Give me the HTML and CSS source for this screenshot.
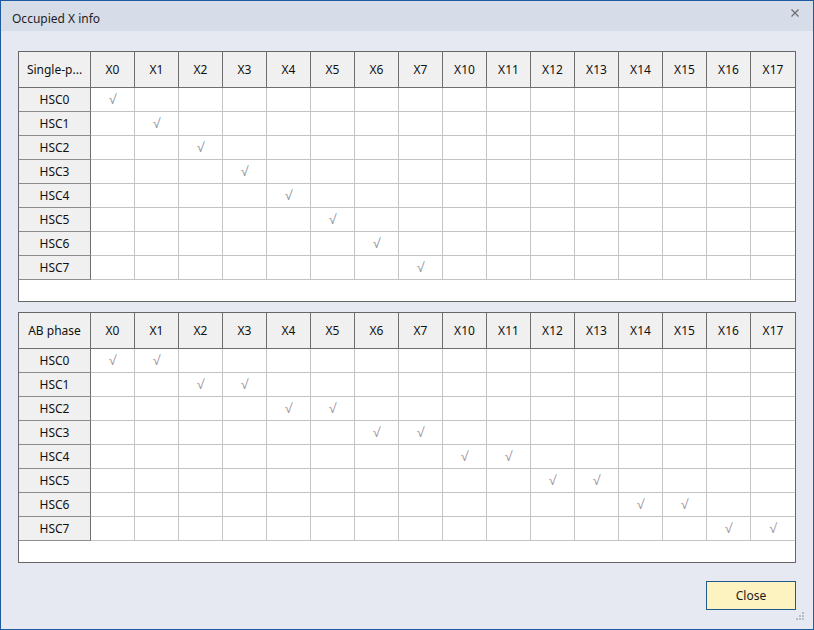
FILE: index.html
```html
<!DOCTYPE html>
<html>
<head>
<meta charset="utf-8">
<link rel="stylesheet" href="styles.css">
</head>
<body>
<div class="window">
  <div class="titlebar">
    <span class="title">Occupied X info</span>
    <svg class="close-x" width="8" height="8" viewBox="0 0 8 8"><path d="M0.5 0.5 L7.5 7.5 M7.5 0.5 L0.5 7.5" stroke="#6f6f6f" stroke-width="1.3" fill="none"/></svg>
  </div>
  <div class="content">
    <div class="gridbox">
      <div class="grid">
        <div class="hc rh">Single-p...</div><div class="hc">X0</div><div class="hc">X1</div><div class="hc">X2</div><div class="hc">X3</div><div class="hc">X4</div><div class="hc">X5</div><div class="hc">X6</div><div class="hc">X7</div><div class="hc">X10</div><div class="hc">X11</div><div class="hc">X12</div><div class="hc">X13</div><div class="hc">X14</div><div class="hc">X15</div><div class="hc">X16</div><div class="hc last">X17</div>
        <div class="rc">HSC0</div><div class="c">√</div><div class="c"></div><div class="c"></div><div class="c"></div><div class="c"></div><div class="c"></div><div class="c"></div><div class="c"></div><div class="c"></div><div class="c"></div><div class="c"></div><div class="c"></div><div class="c"></div><div class="c"></div><div class="c"></div><div class="c last"></div>
        <div class="rc">HSC1</div><div class="c"></div><div class="c">√</div><div class="c"></div><div class="c"></div><div class="c"></div><div class="c"></div><div class="c"></div><div class="c"></div><div class="c"></div><div class="c"></div><div class="c"></div><div class="c"></div><div class="c"></div><div class="c"></div><div class="c"></div><div class="c last"></div>
        <div class="rc">HSC2</div><div class="c"></div><div class="c"></div><div class="c">√</div><div class="c"></div><div class="c"></div><div class="c"></div><div class="c"></div><div class="c"></div><div class="c"></div><div class="c"></div><div class="c"></div><div class="c"></div><div class="c"></div><div class="c"></div><div class="c"></div><div class="c last"></div>
        <div class="rc">HSC3</div><div class="c"></div><div class="c"></div><div class="c"></div><div class="c">√</div><div class="c"></div><div class="c"></div><div class="c"></div><div class="c"></div><div class="c"></div><div class="c"></div><div class="c"></div><div class="c"></div><div class="c"></div><div class="c"></div><div class="c"></div><div class="c last"></div>
        <div class="rc">HSC4</div><div class="c"></div><div class="c"></div><div class="c"></div><div class="c"></div><div class="c">√</div><div class="c"></div><div class="c"></div><div class="c"></div><div class="c"></div><div class="c"></div><div class="c"></div><div class="c"></div><div class="c"></div><div class="c"></div><div class="c"></div><div class="c last"></div>
        <div class="rc">HSC5</div><div class="c"></div><div class="c"></div><div class="c"></div><div class="c"></div><div class="c"></div><div class="c">√</div><div class="c"></div><div class="c"></div><div class="c"></div><div class="c"></div><div class="c"></div><div class="c"></div><div class="c"></div><div class="c"></div><div class="c"></div><div class="c last"></div>
        <div class="rc">HSC6</div><div class="c"></div><div class="c"></div><div class="c"></div><div class="c"></div><div class="c"></div><div class="c"></div><div class="c">√</div><div class="c"></div><div class="c"></div><div class="c"></div><div class="c"></div><div class="c"></div><div class="c"></div><div class="c"></div><div class="c"></div><div class="c last"></div>
        <div class="rc">HSC7</div><div class="c"></div><div class="c"></div><div class="c"></div><div class="c"></div><div class="c"></div><div class="c"></div><div class="c"></div><div class="c">√</div><div class="c"></div><div class="c"></div><div class="c"></div><div class="c"></div><div class="c"></div><div class="c"></div><div class="c"></div><div class="c last"></div>
      </div>
    </div>
    <div class="gridbox">
      <div class="grid">
        <div class="hc rh">AB phase</div><div class="hc">X0</div><div class="hc">X1</div><div class="hc">X2</div><div class="hc">X3</div><div class="hc">X4</div><div class="hc">X5</div><div class="hc">X6</div><div class="hc">X7</div><div class="hc">X10</div><div class="hc">X11</div><div class="hc">X12</div><div class="hc">X13</div><div class="hc">X14</div><div class="hc">X15</div><div class="hc">X16</div><div class="hc last">X17</div>
        <div class="rc">HSC0</div><div class="c ab">√</div><div class="c ab">√</div><div class="c"></div><div class="c"></div><div class="c"></div><div class="c"></div><div class="c"></div><div class="c"></div><div class="c"></div><div class="c"></div><div class="c"></div><div class="c"></div><div class="c"></div><div class="c"></div><div class="c"></div><div class="c last"></div>
        <div class="rc">HSC1</div><div class="c"></div><div class="c"></div><div class="c ab">√</div><div class="c ab">√</div><div class="c"></div><div class="c"></div><div class="c"></div><div class="c"></div><div class="c"></div><div class="c"></div><div class="c"></div><div class="c"></div><div class="c"></div><div class="c"></div><div class="c"></div><div class="c last"></div>
        <div class="rc">HSC2</div><div class="c"></div><div class="c"></div><div class="c"></div><div class="c"></div><div class="c ab">√</div><div class="c ab">√</div><div class="c"></div><div class="c"></div><div class="c"></div><div class="c"></div><div class="c"></div><div class="c"></div><div class="c"></div><div class="c"></div><div class="c"></div><div class="c last"></div>
        <div class="rc">HSC3</div><div class="c"></div><div class="c"></div><div class="c"></div><div class="c"></div><div class="c"></div><div class="c"></div><div class="c ab">√</div><div class="c ab">√</div><div class="c"></div><div class="c"></div><div class="c"></div><div class="c"></div><div class="c"></div><div class="c"></div><div class="c"></div><div class="c last"></div>
        <div class="rc">HSC4</div><div class="c"></div><div class="c"></div><div class="c"></div><div class="c"></div><div class="c"></div><div class="c"></div><div class="c"></div><div class="c"></div><div class="c ab">√</div><div class="c ab">√</div><div class="c"></div><div class="c"></div><div class="c"></div><div class="c"></div><div class="c"></div><div class="c last"></div>
        <div class="rc">HSC5</div><div class="c"></div><div class="c"></div><div class="c"></div><div class="c"></div><div class="c"></div><div class="c"></div><div class="c"></div><div class="c"></div><div class="c"></div><div class="c"></div><div class="c ab">√</div><div class="c ab">√</div><div class="c"></div><div class="c"></div><div class="c"></div><div class="c last"></div>
        <div class="rc">HSC6</div><div class="c"></div><div class="c"></div><div class="c"></div><div class="c"></div><div class="c"></div><div class="c"></div><div class="c"></div><div class="c"></div><div class="c"></div><div class="c"></div><div class="c"></div><div class="c"></div><div class="c ab">√</div><div class="c ab">√</div><div class="c"></div><div class="c last"></div>
        <div class="rc">HSC7</div><div class="c"></div><div class="c"></div><div class="c"></div><div class="c"></div><div class="c"></div><div class="c"></div><div class="c"></div><div class="c"></div><div class="c"></div><div class="c"></div><div class="c"></div><div class="c"></div><div class="c"></div><div class="c"></div><div class="c ab">√</div><div class="c ab last">√</div>
      </div>
    </div>
    <div class="footer">
      <button class="btn">Close</button>
    </div>
  </div>
  <svg class="grip" width="8" height="8" viewBox="0 0 8 8">
    <rect x="6" y="0" width="2" height="2" fill="#b4bccb"/>
    <rect x="3" y="3" width="2" height="2" fill="#b4bccb"/>
    <rect x="6" y="3" width="2" height="2" fill="#b4bccb"/>
    <rect x="0" y="6" width="2" height="2" fill="#b4bccb"/>
    <rect x="3" y="6" width="2" height="2" fill="#b4bccb"/>
    <rect x="6" y="6" width="2" height="2" fill="#b4bccb"/>
  </svg>
</div>
</body>
</html>
```

FILE: styles.css
```css
html, body {
  margin: 0;
  padding: 0;
}
body {
  font-family: "Segoe UI", "Noto Sans", "Open Sans", sans-serif;
  font-size: 12px;
  color: #000;
  background: #e6e9f2;
}
.window {
  position: relative;
  width: 814px;
  height: 630px;
  box-sizing: border-box;
  border: 1px solid #1d5b9e;
  background: #e6e9f2;
  display: flex;
  flex-direction: column;
}
.titlebar {
  height: 30px;
  flex: none;
  background: #d6dce8;
  display: flex;
  justify-content: space-between;
  align-items: flex-start;
  padding: 0 14px 0 11px;
}
.title {
  margin-top: 10px;
  line-height: 16px;
  color: #1e1e1e;
}
.close-x {
  margin-top: 8px;
}
.content {
  padding: 20px 17px 0 17px;
  display: flex;
  flex-direction: column;
  gap: 10px;
}
.gridbox {
  height: 251px;
  box-sizing: border-box;
  border: 1px solid #666;
  background: #fff;
}
.grid {
  display: grid;
  grid-template-columns: 72px repeat(16, 44px);
  grid-template-rows: 36px repeat(8, 24px);
}
.hc, .rc, .c {
  box-sizing: border-box;
  display: flex;
  align-items: center;
  justify-content: center;
}
.hc {
  background: #f0f0f0;
  border-right: 1px solid #6e6e6e;
  border-bottom: 1px solid #6e6e6e;
  color: #111;
}
.rc {
  background: #f0f0f0;
  border-right: 1px solid #6e6e6e;
  border-bottom: 1px solid #8c8c8c;
  color: #111;
}
.c {
  border-right: 1px solid #c4c4c4;
  border-bottom: 1px solid #c4c4c4;
  color: #8e93a0;
  font-size: 13px;
  padding-bottom: 1px;
}
.c.ab {
  color: #a0939f;
}
.last {
  border-right: none;
}
.footer {
  display: flex;
  justify-content: flex-end;
  margin-top: 8px;
}
.btn {
  width: 90px;
  height: 29px;
  box-sizing: border-box;
  border: 1px solid #1f5a8e;
  background: #fcf3c1;
  font-family: "Segoe UI", "Noto Sans", "Open Sans", sans-serif;
  font-size: 12px;
  color: #1a1a1a;
  padding: 0;
}
.grip {
  position: absolute;
  right: 9px;
  bottom: 9px;
}
```
